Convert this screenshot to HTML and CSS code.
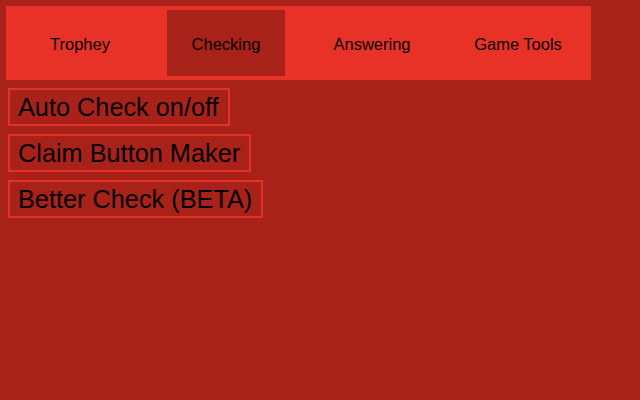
FILE: index.html
```html
<!DOCTYPE html>
<html>
<head>
<meta charset="utf-8">
<link rel="stylesheet" href="styles.css">
</head>
<body>
<nav class="tabs">
  <div class="tab">Trophey</div>
  <div class="tab active">Checking</div>
  <div class="tab">Answering</div>
  <div class="tab">Game Tools</div>
</nav>
<div class="panel">
  <div class="btn">Auto Check on/off</div>
  <div class="btn">Claim Button Maker</div>
  <div class="btn">Better Check (BETA)</div>
</div>
</body>
</html>
```

FILE: styles.css
```css
html, body {
  margin: 0;
  height: 100%;
  background: #a9221a;
}
body {
  padding: 6px;
  box-sizing: border-box;
  font-family: "Liberation Sans", Arial, sans-serif;
  color: #000;
}
.tabs {
  display: flex;
  width: 585px;
  box-sizing: border-box;
  padding: 4px 14px 4px 15px;
  gap: 28px;
  background: #e93227;
}
.tab {
  width: 118px;
  height: 66px;
  box-sizing: border-box;
  padding-top: 3px;
  display: flex;
  align-items: center;
  justify-content: center;
  font-size: 16.5px;
}
.tab.active {
  background: #a9221a;
}
.panel {
  display: flex;
  flex-direction: column;
  align-items: flex-start;
  gap: 8px;
  padding: 8px 0 0 2px;
}
.btn {
  border: 2px solid #e53127;
  padding: 2px 9px 2px 8px;
  font-size: 25.3px;
  line-height: 30px;
}
```
